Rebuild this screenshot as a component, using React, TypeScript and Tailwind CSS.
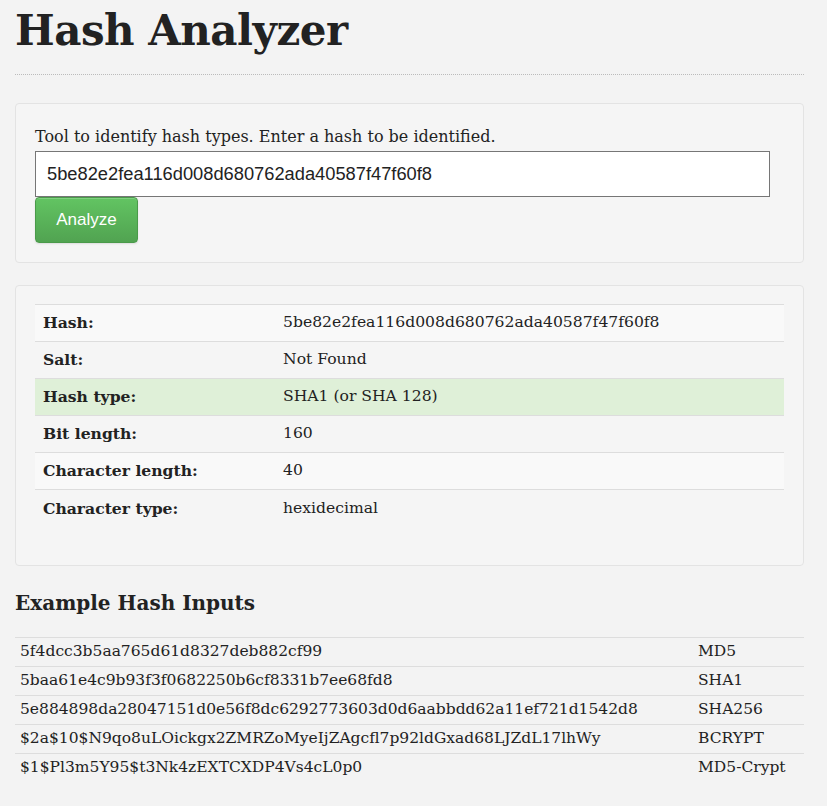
import React, { useState } from "react"

const results = [
  { label: "Hash:", value: "5be82e2fea116d008d680762ada40587f47f60f8" },
  { label: "Salt:", value: "Not Found" },
  { label: "Hash type:", value: "SHA1 (or SHA 128)", success: true },
  { label: "Bit length:", value: "160" },
  { label: "Character length:", value: "40" },
  { label: "Character type:", value: "hexidecimal" },
]

const examples = [
  ["5f4dcc3b5aa765d61d8327deb882cf99", "MD5"],
  ["5baa61e4c9b93f3f0682250b6cf8331b7ee68fd8", "SHA1"],
  ["5e884898da28047151d0e56f8dc6292773603d0d6aabbdd62a11ef721d1542d8", "SHA256"],
  ["$2a$10$N9qo8uLOickgx2ZMRZoMyeIjZAgcfl7p92ldGxad68LJZdL17lhWy", "BCRYPT"],
  ["$1$Pl3m5Y95$t3Nk4zEXTCXDP4Vs4cL0p0", "MD5-Crypt"],
]

const App = () => {
  const [hash, setHash] = useState("5be82e2fea116d008d680762ada40587f47f60f8")

  return (
    <div className="min-h-screen bg-[#f3f3f3] text-[#333] font-['DejaVu_Serif',serif]">
      <div className="w-[789px] ml-[15px] pb-6">
        {/* Title */}
        <h1 className="pt-[7px] text-[42px] leading-[48px] font-bold text-[#222] tracking-[-0.5px]">
          Hash Analyzer
        </h1>
        <div className="mt-[19px] border-b border-dotted border-[#bbb]"></div>

        {/* Input well */}
        <div className="mt-[28px] bg-[#f5f5f5] border border-[#e3e3e3] rounded-[4px] px-[19px] pt-[21px] pb-[19px]">
          <p className="text-[16px] leading-[24px] text-[#222] mb-[2px]">
            Tool to identify hash types. Enter a hash to be identified.
          </p>
          <form onSubmit={(e) => e.preventDefault()}>
            <input
              type="text"
              value={hash}
              onChange={(e) => setHash(e.target.value)}
              className="block w-[735px] h-[46px] bg-white border border-[#767676] px-[11px] text-[18.3px] text-[#222] font-['Liberation_Sans',Arial,sans-serif] outline-none"
            />
            <button
              type="submit"
              className="block w-[103px] h-[46px] rounded-[4px] bg-gradient-to-b from-[#62c462] to-[#51a351] border border-[#4a9a4a] text-white text-[17px] font-['Liberation_Sans',Arial,sans-serif] shadow-[inset_0_1px_0_rgba(255,255,255,0.2),0_1px_2px_rgba(0,0,0,0.1)]"
            >
              Analyze
            </button>
          </form>
        </div>

        {/* Result well */}
        <div className="mt-[22px] bg-[#f5f5f5] border border-[#e3e3e3] rounded-[4px] px-[19px] pt-[18px] pb-[38px]">
          <table className="w-full border-collapse text-[15.6px] text-[#222]">
            <tbody>
              {results.map((r, i) => (
                <tr
                  key={r.label}
                  className={r.success ? "bg-[#dff0d8]" : i % 2 === 0 ? "bg-[#f9f9f9]" : ""}
                >
                  <td className="w-[240px] h-[37px] px-[8px] border-t border-[#ddd] font-bold">{r.label}</td>
                  <td className="h-[37px] px-[8px] border-t border-[#ddd]">{r.value}</td>
                </tr>
              ))}
            </tbody>
          </table>
        </div>

        {/* Examples */}
        <h3 className="mt-[22px] text-[20px] leading-[30px] font-bold text-[#222]">Example Hash Inputs</h3>
        <table className="mt-[19px] w-full border-collapse text-[15.5px] text-[#222]">
          <tbody>
            {examples.map(([h, t]) => (
              <tr key={t}>
                <td className="h-[29px] px-[5px] border-t border-[#ddd]">{h}</td>
                <td className="w-[111px] h-[29px] px-[5px] border-t border-[#ddd]">{t}</td>
              </tr>
            ))}
          </tbody>
        </table>
      </div>
    </div>
  )
}

export default App
